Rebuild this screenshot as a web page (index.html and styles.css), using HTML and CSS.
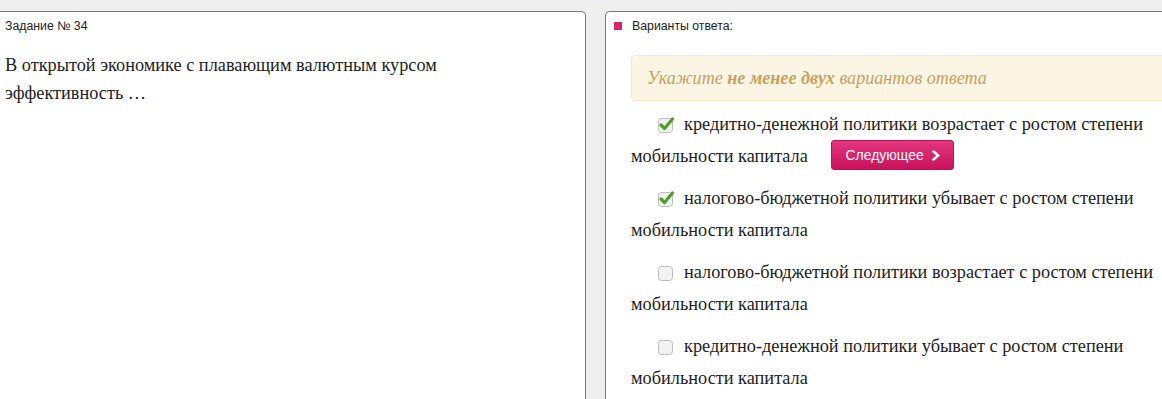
FILE: index.html
```html
<!DOCTYPE html>
<html lang="ru">
<head>
<meta charset="utf-8">
<link rel="stylesheet" href="styles.css">
</head>
<body>
<div class="page">
  <section class="panel panel-task">
    <div class="task-title">Задание № 34</div>
    <div class="task-text">В открытой экономике с плавающим валютным курсом эффективность …</div>
  </section>
  <section class="panel panel-answers">
    <div class="answers-head"><span class="marker"></span>Варианты ответа:</div>
    <div class="alert">Укажите <b>не менее двух</b> вариантов ответа</div>
    <div class="option"><span class="cb checked"><svg width="18" height="18" viewBox="0 0 18 18"><rect x="1.5" y="3.5" width="14" height="14" rx="3" fill="#f2f2f2" stroke="#bdbdbd"/><path d="M4 10 L7.5 13.5 L15.5 4" fill="none" stroke="#4f9e2c" stroke-width="3.2" stroke-linecap="round" stroke-linejoin="round"/></svg></span>кредитно-денежной политики возрастает с ростом степени мобильности капитала <button class="btn-next">Следующее <svg width="10" height="11" viewBox="0 0 10 11"><path d="M2.5 1.5 L7 5.5 L2.5 9.5" fill="none" stroke="#fff" stroke-width="2.6" stroke-linecap="square"/></svg></button></div>
    <div class="option"><span class="cb checked"><svg width="18" height="18" viewBox="0 0 18 18"><rect x="1.5" y="3.5" width="14" height="14" rx="3" fill="#f2f2f2" stroke="#bdbdbd"/><path d="M4 10 L7.5 13.5 L15.5 4" fill="none" stroke="#4f9e2c" stroke-width="3.2" stroke-linecap="round" stroke-linejoin="round"/></svg></span>налогово-бюджетной политики убывает с ростом степени мобильности капитала</div>
    <div class="option"><span class="cb"><svg width="18" height="18" viewBox="0 0 18 18"><rect x="1.5" y="3.5" width="14" height="14" rx="3" fill="#f2f2f2" stroke="#bdbdbd"/></svg></span>налогово-бюджетной политики возрастает с ростом степени мобильности капитала</div>
    <div class="option"><span class="cb"><svg width="18" height="18" viewBox="0 0 18 18"><rect x="1.5" y="3.5" width="14" height="14" rx="3" fill="#f2f2f2" stroke="#bdbdbd"/></svg></span>кредитно-денежной политики убывает с ростом степени мобильности капитала</div>
  </section>
</div>
</body>
</html>
```
FILE: styles.css
```css
html, body {
  margin: 0;
  padding: 0;
  background: #efefef;
  overflow: hidden;
}
.page {
  display: flex;
  gap: 19px;
  padding-top: 11px;
  height: 388px;
  width: 1200px;
}
.panel {
  background: #fff;
  border-top: 1px solid #7070c2;
  box-sizing: border-box;
}
.panel-task {
  width: 586px;
  flex: none;
  border-right: 1px solid #7070c2;
  border-top-right-radius: 5px;
  padding: 6px 0 0 5px;
}
.panel-answers {
  flex: 1;
  border-left: 1px solid #7070c2;
  border-top-left-radius: 5px;
  padding: 6px 0 0 25px;
}
.task-title, .answers-head {
  font: 12.3px/16px "Liberation Sans", Arial, sans-serif;
  color: #222;
}
.task-text {
  margin-top: 17px;
  width: 480px;
  font: 18.3px/28px "Liberation Serif", "Times New Roman", serif;
  color: #222;
}
.answers-head {
  display: flex;
  align-items: center;
  margin-left: -17px;
}
.marker {
  width: 8px;
  height: 8px;
  background: #d6246e;
  margin-right: 10px;
}
.alert {
  margin-top: 21px;
  width: 560px;
  height: 46px;
  box-sizing: border-box;
  padding: 0 15px;
  background: #fcf5e3;
  border: 1px solid #f5e9c9;
  border-radius: 4px;
  font: italic 18.1px/44px "Liberation Serif", "Times New Roman", serif;
  color: #c9a15c;
}
.alert b { font-weight: bold; }
.option {
  width: 530px;
  margin-top: 7px;
  margin-bottom: 10px;
  text-indent: 26px;
  font: 18.3px/32px "Liberation Serif", "Times New Roman", serif;
  color: #222;
}
.option + .option { margin-top: 0; }
.cb {
  display: inline-block;
  width: 18px;
  height: 18px;
  vertical-align: -3px;
  margin-right: 9px;
  text-indent: 0;
}
.cb svg { display: block; }
.btn-next {
  display: inline-flex;
  align-items: center;
  gap: 7px;
  margin-left: 19px;
  height: 30px;
  padding: 0 12px 0 13px;
  vertical-align: 2px;
  text-indent: 0;
  border: 1px solid #bb1256;
  border-radius: 3px;
  background: linear-gradient(#e5367f, #c8125b);
  color: #fff;
  font: 14px "Liberation Sans", Arial, sans-serif;
}
```
